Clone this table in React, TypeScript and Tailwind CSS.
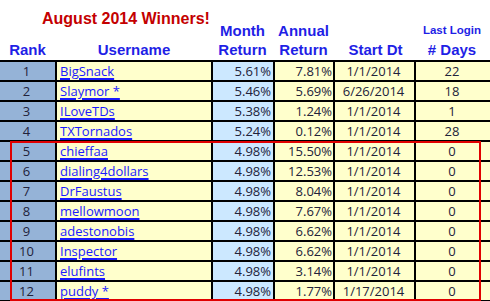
import React from "react";

const rows: [string, string, string, string, string, string][] = [
  ["1", "BigSnack", "5.61%", "7.81%", "1/1/2014", "22"],
  ["2", "Slaymor *", "5.46%", "5.69%", "6/26/2014", "18"],
  ["3", "ILoveTDs", "5.38%", "1.24%", "1/1/2014", "1"],
  ["4", "TXTornados", "5.24%", "0.12%", "1/1/2014", "28"],
  ["5", "chieffaa", "4.98%", "15.50%", "1/1/2014", "0"],
  ["6", "dialing4dollars", "4.98%", "12.53%", "1/1/2014", "0"],
  ["7", "DrFaustus", "4.98%", "8.04%", "1/1/2014", "0"],
  ["8", "mellowmoon", "4.98%", "7.67%", "1/1/2014", "0"],
  ["9", "adestonobis", "4.98%", "6.62%", "1/1/2014", "0"],
  ["10", "Inspector", "4.98%", "6.62%", "1/1/2014", "0"],
  ["11", "elufints", "4.98%", "3.14%", "1/1/2014", "0"],
  ["12", "puddy *", "4.98%", "1.77%", "1/17/2014", "0"],
];

const cols = "grid grid-cols-[57px_156px_62px_60px_81px_74px]";

export default function App() {
  return (
    <div className="w-[490px] h-[301px] overflow-hidden bg-white relative">
      {/* Header */}
      <div
        className={`${cols} grid-rows-[21px_19px_20px] h-[60px] text-[15px] font-bold text-[#1f1fe6] leading-[19px]`}
        style={{ fontFamily: '"Liberation Sans", Arial, sans-serif' }}
      >
        <div className="col-start-1 col-end-4 row-start-1 row-end-3 pt-[10px] pl-[42px] text-[16px] leading-[18px] text-[#c40000] whitespace-nowrap">
          August 2014 Winners!
        </div>
        <div className="col-start-3 row-start-2 text-center pr-[3px]">Month</div>
        <div className="col-start-4 row-start-2 text-center pr-[3px]">Annual</div>
        <div className="col-start-6 row-start-2 text-center text-[11.5px] pr-[2px]">Last Login</div>
        <div className="col-start-1 row-start-3 text-center pr-[2px]">Rank</div>
        <div className="col-start-2 row-start-3 text-center pr-[2px]">Username</div>
        <div className="col-start-3 row-start-3 text-center pr-[3px]">Return</div>
        <div className="col-start-4 row-start-3 text-center pr-[3px]">Return</div>
        <div className="col-start-5 row-start-3 text-center">Start Dt</div>
        <div className="col-start-6 row-start-3 text-center pr-[2px]">
          # Days
        </div>
      </div>

      {/* Table */}
      <div
        className="border-t-2 border-black text-[13px] leading-[18px] text-[#22223a]"
        style={{ fontFamily: '"Open Sans", "Noto Sans", sans-serif' }}
      >
        {rows.map((r) => (
          <div key={r[0]} className={`${cols} h-[20px] border-b-2 border-black`}>
            <div className="bg-[#95b3d7] border-r-2 border-black text-center pr-[2px]">{r[0]}</div>
            <div className="bg-[#ffffcc] border-r-2 border-black pl-[3px]">
              <span className="text-[#1a1aff] underline underline-offset-[2px] decoration-[1.5px]">{r[1]}</span>
            </div>
            <div className="bg-[#cce8ff] border-r-2 border-black text-right pr-[2px]">{r[2]}</div>
            <div className="bg-[#ffffcc] border-r-2 border-black text-right pr-[1px]">{r[3]}</div>
            <div className="bg-[#ffffcc] border-r-2 border-black text-center pr-[2px]">{r[4]}</div>
            <div className="bg-[#ffffcc] text-center pr-[2px]">{r[5]}</div>
          </div>
        ))}
      </div>

      {/* Red highlight rectangle */}
      <div className="absolute left-[10px] top-[141px] w-[471px] h-[160px] border-2 border-[#e00000] pointer-events-none" />
    </div>
  );
}
